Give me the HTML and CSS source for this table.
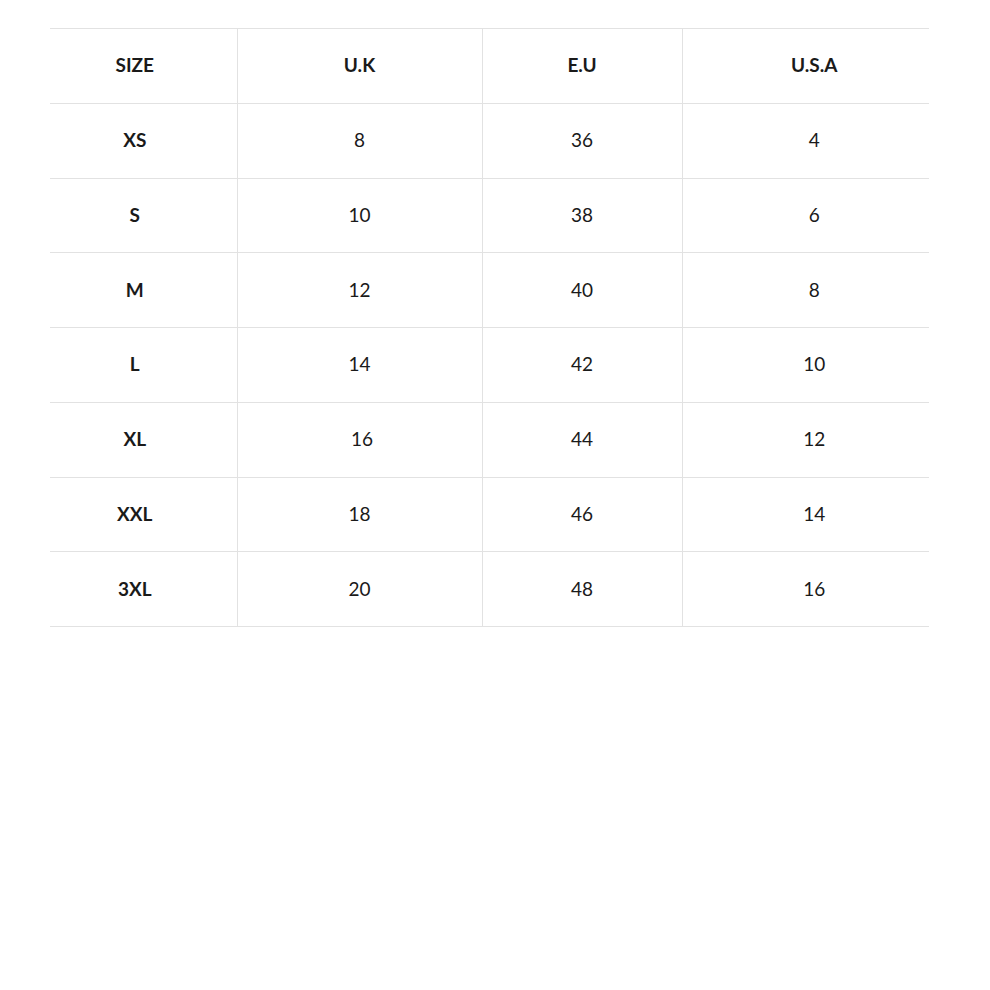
FILE: index.html
```html
<!DOCTYPE html>
<html>
<head>
<meta charset="utf-8">
<link rel="stylesheet" href="styles.css">
</head>
<body>
<div class="wrap">
<table class="chart">
<colgroup><col class="c1"><col class="c2"><col class="c3"><col class="c4"></colgroup>
<thead>
<tr><th>SIZE</th><th>U.K</th><th>E.U</th><th>U.S.A</th></tr>
</thead>
<tbody>
<tr><th>XS</th><td>8</td><td>36</td><td>4</td></tr>
<tr><th>S</th><td>10</td><td>38</td><td>6</td></tr>
<tr><th>M</th><td>12</td><td>40</td><td>8</td></tr>
<tr><th>L</th><td>14</td><td>42</td><td>10</td></tr>
<tr><th>XL</th><td>&nbsp;16</td><td>44</td><td>12</td></tr>
<tr><th>XXL</th><td>18</td><td>46</td><td>14</td></tr>
<tr><th>3XL</th><td>20</td><td>48</td><td>16</td></tr>
</tbody>
</table>
</div>
</body>
</html>
```
FILE: styles.css
```css
html, body { margin: 0; padding: 0; background: #fff; }
.wrap { padding: 28px 0 0 50px; }
.chart {
  width: 879px;
  border-collapse: collapse;
  table-layout: fixed;
  font-family: Lato, "Open Sans", "Liberation Sans", sans-serif;
  color: #1a1a1a;
}
.c1 { width: 187px; }
.c2 { width: 245px; }
.c3 { width: 200px; }
.c4 { width: 247px; }
.chart th, .chart td {
  height: 71.75px;
  padding: 0 0 2px 0;
  text-align: center;
  vertical-align: middle;
  border-top: 1px solid #e2e2e2;
  border-bottom: 1px solid #e2e2e2;
  border-left: 1px solid #e2e2e2;
}
.chart tr > :first-child { border-left: none; padding-right: 17px; }
.chart tr > :last-child { padding-left: 17px; }
.chart th { font-weight: 700; font-size: 19px; }
.chart td { font-weight: 400; font-size: 19px; }
```
